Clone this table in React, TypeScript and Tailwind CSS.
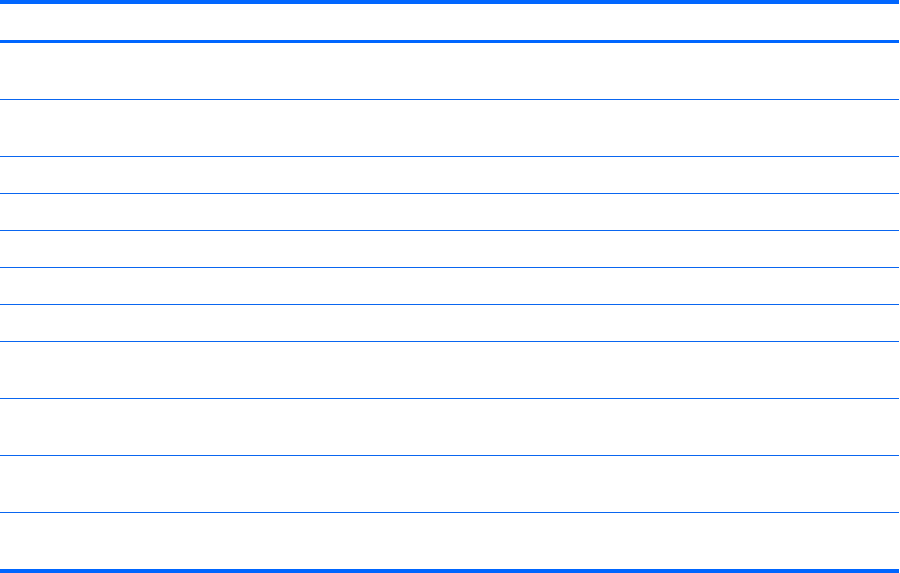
const rows = [
  "h-[57px] border-b border-[#0a66f0]",
  "h-[57px] border-b border-[#0a66f0]",
  "h-[37px] border-b border-[#0a66f0]",
  "h-[37px] border-b border-[#0a66f0]",
  "h-[37px] border-b border-[#0a66f0]",
  "h-[37px] border-b border-[#0a66f0]",
  "h-[37px] border-b border-[#0a66f0]",
  "h-[57px] border-b border-[#0a66f0]",
  "h-[57px] border-b border-[#0a66f0]",
  "h-[57px] border-b border-[#0a66f0]",
  "h-[56px]",
];

export default function App() {
  return (
    <div className="min-h-screen bg-white font-['Liberation_Sans',sans-serif]">
      <div className="flex w-[899px] flex-col border-y-4 border-[#0066ff]">
        <div className="h-[39px] border-b-[3px] border-[#0066ff]" />
        {rows.map((cls, i) => (
          <div key={i} className={cls} />
        ))}
      </div>
    </div>
  );
}
